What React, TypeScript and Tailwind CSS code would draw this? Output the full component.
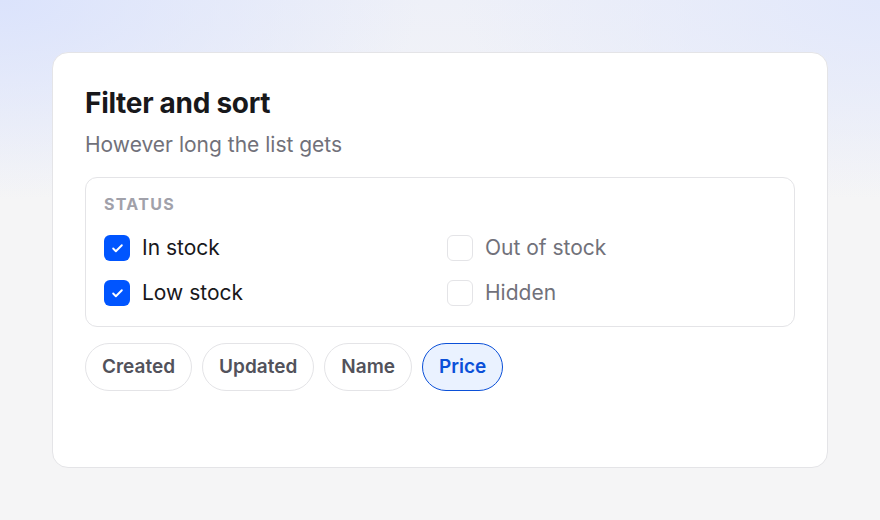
import React, { useState } from 'react';
import { Check } from 'lucide-react';

type Option = { id: string; label: string };

const statuses: Option[] = [
  { id: 'in', label: 'In stock' },
  { id: 'out', label: 'Out of stock' },
  { id: 'low', label: 'Low stock' },
  { id: 'hidden', label: 'Hidden' },
];

const sorts = ['Created', 'Updated', 'Name', 'Price'];

const App: React.FC = () => {
  const [checked, setChecked] = useState<string[]>(['in', 'low']);
  const [sort, setSort] = useState('Price');

  const toggle = (id: string) =>
    setChecked(prev => (prev.includes(id) ? prev.filter(x => x !== id) : [...prev, id]));

  return (
    <div
      className="min-h-screen w-full bg-[#f5f5f6] bg-[radial-gradient(ellipse_420px_200px_at_0%_0%,#dbe3fc,transparent),radial-gradient(ellipse_420px_200px_at_100%_0%,#e2e8fb,transparent),linear-gradient(to_bottom,#eef0f8_0px,#f5f5f6_200px)] pt-[52px] px-[52px]"
      style={{ fontFamily: 'Inter, "Noto Sans", sans-serif' }}
    >
      {/* Card */}
      <div className="w-[776px] h-[416px] bg-white border border-[#e4e4e7] rounded-[16px] px-[32px] pt-[33px]">
        <h1 className="text-[28px] leading-[34px] font-bold text-[#18181b] tracking-[-0.3px]">Filter and sort</h1>
        <p className="mt-[12px] text-[21px] leading-[26px] text-[#71717a]">However long the list gets</p>

        {/* Status group */}
        <div className="mt-[19px] border border-[#e4e4e7] rounded-[12px] px-[18px] pt-[16px] pb-[20px]">
          <div className="text-[16px] leading-[20px] font-bold tracking-[1.3px] text-[#a1a1aa]">STATUS</div>
          <div className="mt-[21px] grid grid-cols-2 gap-x-[14px] gap-y-[19px]">
            {statuses.map(s => {
              const on = checked.includes(s.id);
              return (
                <label key={s.id} className="flex items-center gap-[12px] cursor-pointer" onClick={() => toggle(s.id)}>
                  <span
                    className={
                      on
                        ? 'w-[26px] h-[26px] rounded-[6px] bg-[#0055ff] flex items-center justify-center'
                        : 'w-[26px] h-[26px] rounded-[6px] border border-[#e4e4e7] bg-white'
                    }
                  >
                    {on && <Check className="w-[13px] h-[13px] text-white" strokeWidth={3.5} />}
                  </span>
                  <span className={on ? 'text-[21px] leading-[26px] text-[#18181b]' : 'text-[21px] leading-[26px] text-[#71717a]'}>
                    {s.label}
                  </span>
                </label>
              );
            })}
          </div>
        </div>

        {/* Sort chips */}
        <div className="mt-[16px] flex gap-[10px]">
          {sorts.map(s => (
            <button
              key={s}
              onClick={() => setSort(s)}
              className={
                s === sort
                  ? 'h-[48px] px-[16px] rounded-full border border-[#0b50d8] bg-[#eaf2ff] text-[19px] font-semibold text-[#0b50d8]'
                  : 'h-[48px] px-[16px] rounded-full border border-[#e4e4e7] bg-white text-[19px] font-semibold text-[#52525b]'
              }
            >
              {s}
            </button>
          ))}
        </div>
      </div>
    </div>
  );
};

export default App;
